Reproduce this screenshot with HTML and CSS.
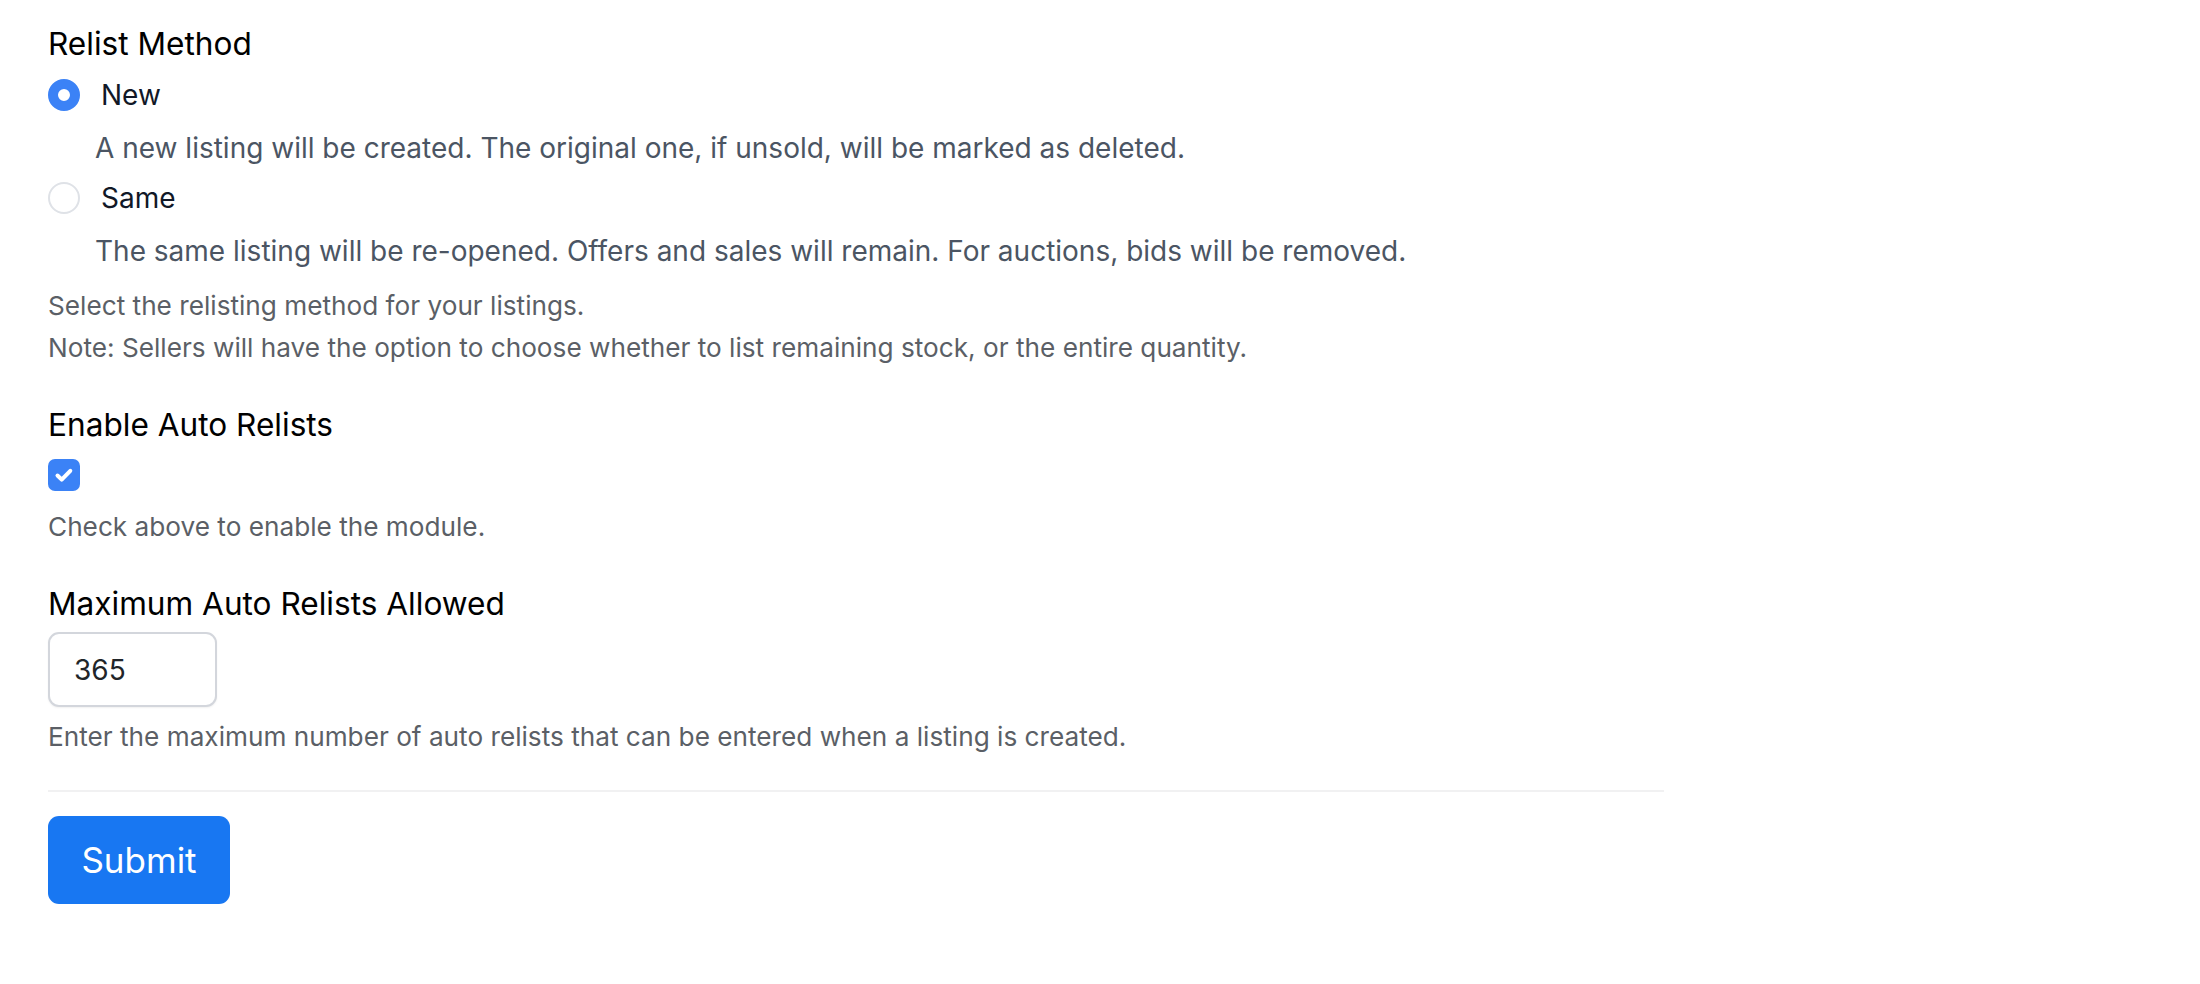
FILE: index.html
```html
<!DOCTYPE html>
<html lang="en">
<head>
<meta charset="utf-8">
<title>Relist Settings</title>
<link rel="stylesheet" href="styles.css">
</head>
<body>
<form class="page">
  <div class="field">
    <div class="label">Relist Method</div>
    <div class="options">
      <div class="option">
        <label class="option-row">
          <span class="radio radio-on"></span>
          <span class="option-text">New</span>
        </label>
        <div class="option-desc">A new listing will be created. The original one, if unsold, will be marked as deleted.</div>
      </div>
      <div class="option">
        <label class="option-row">
          <span class="radio"></span>
          <span class="option-text">Same</span>
        </label>
        <div class="option-desc">The same listing will be re-opened. Offers and sales will remain. For auctions, bids will be removed.</div>
      </div>
    </div>
    <div class="help">Select the relisting method for your listings.<br>Note: Sellers will have the option to choose whether to list remaining stock, or the entire quantity.</div>
  </div>

  <div class="field field-gap">
    <div class="label">Enable Auto Relists</div>
    <div class="check-wrap">
      <span class="checkbox">
        <svg viewBox="0 0 32 32" width="32" height="32" aria-hidden="true"><path d="M9.5 16.5l4.2 4.2 8.6-8.9" fill="none" stroke="#fff" stroke-width="4" stroke-linecap="round" stroke-linejoin="round"/></svg>
      </span>
    </div>
    <div class="help help-check">Check above to enable the module.</div>
  </div>

  <div class="field field-gap">
    <div class="label">Maximum Auto Relists Allowed</div>
    <div class="input-wrap"><input class="num-input" type="text" value="365"></div>
    <div class="help help-input">Enter the maximum number of auto relists that can be entered when a listing is created.</div>
  </div>

  <div class="divider"></div>

  <div class="actions"><button type="button" class="btn">Submit</button></div>
</form>
</body>
</html>
```
FILE: styles.css
```css
* { box-sizing: border-box; }
html, body { margin: 0; padding: 0; background: #fff; }
body { font-family: "Inter", "Liberation Sans", sans-serif; color: #111827; }

.page {
  width: 1664px;
  padding: 24px 0 0 48px;
  display: flex;
  flex-direction: column;
}

.label {
  font-size: 31.6px;
  line-height: 40px;
  color: #000;
}

.options { display: flex; flex-direction: column; margin-top: 13px; }
.option { display: flex; flex-direction: column; margin-bottom: 14px; }

.option-row {
  display: flex;
  align-items: center;
  height: 36px;
  gap: 21px;
}
.option-text { font-size: 28px; line-height: 36px; color: #111827; }

.radio {
  width: 32px;
  height: 32px;
  border-radius: 50%;
  border: 2px solid #dfe2e7;
  background: #fff;
  flex: none;
}
.radio-on {
  border: 10px solid #3b82f6;
  background: #fff;
}

.option-desc {
  margin-top: 17px;
  padding-left: 47px;
  font-size: 28px;
  line-height: 36px;
  color: #4b5563;
}

.help {
  font-size: 26.2px;
  line-height: 42px;
  color: #5b5f66;
  margin-top: 2px;
}

.field-gap { margin-top: 36px; }

.check-wrap { margin-top: 14px; height: 32px; display: flex; }
.checkbox {
  width: 32px;
  height: 32px;
  border-radius: 7px;
  background: #3b82f6;
  display: flex;
}
.help-check { margin-top: 15px; }

.input-wrap { margin-top: 8px; display: flex; }
.num-input {
  width: 169px;
  height: 75px;
  border: 2px solid #d3d6dc;
  border-radius: 11px;
  padding: 0 0 0 24px;
  font-family: "Inter", "Liberation Sans", sans-serif;
  font-size: 28px;
  line-height: 71px;
  color: #212529;
  background: #fff;
  box-shadow: 0 1px 2px rgba(0,0,0,0.06);
  outline: none;
}
.help-input { margin-top: 9px; }

.divider {
  margin-top: 32px;
  height: 2px;
  background: #f1f1f2;
  width: 1616px;
}

.actions { margin-top: 24px; display: flex; }
.btn {
  height: 88px;
  width: 182px;
  padding: 0;
  border: none;
  border-radius: 11px;
  background: #1877f2;
  color: #fff;
  font-family: "Inter", "Liberation Sans", sans-serif;
  font-size: 35px;
  line-height: 88px;
  cursor: pointer;
}
```
